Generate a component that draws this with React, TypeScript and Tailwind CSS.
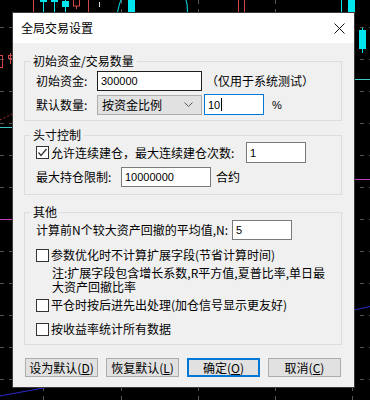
import type { ReactNode } from "react";

const GRID_ROWS = [27, 59, 91, 123, 155, 187, 219, 251, 283, 315, 347, 379];
const GRID_COLS = [43, 121, 198, 275, 352];

function ChartBackdrop() {
  return (
    <svg className="absolute inset-0" width={370} height={400} viewBox="0 0 370 400" aria-hidden>
      {GRID_ROWS.map((y) => (
        <line key={`r${y}`} x1={0} x2={370} y1={y + 0.5} y2={y + 0.5} stroke="#555" strokeDasharray="4 5" />
      ))}
      {GRID_COLS.map((x) => (
        <line key={`c${x}`} x1={x + 0.5} x2={x + 0.5} y1={0} y2={400} stroke="#555" strokeDasharray="4 5" />
      ))}
      {/* top strip candles */}
      <line x1={33.5} x2={33.5} y1={0} y2={12} stroke="#d04848" />
      <rect x={40} y={0} width={7} height={2} fill="#00e5ee" />
      <line x1={43.5} x2={43.5} y1={0} y2={12} stroke="#00e5ee" />
      <rect x={51} y={0} width={7} height={2} fill="#00e5ee" />
      <line x1={54.5} x2={54.5} y1={0} y2={12} stroke="#00e5ee" />
      <rect x={62} y={1} width={7} height={6} fill="#00e5ee" />
      <line x1={65.5} x2={65.5} y1={0} y2={12} stroke="#00e5ee" />
      <rect x={73.5} y={-1} width={6} height={7} fill="none" stroke="#d04848" />
      <line x1={76.5} x2={76.5} y1={6} y2={9} stroke="#d04848" />
      <line x1={88.5} x2={88.5} y1={0} y2={12} stroke="#d04848" />
      <line x1={99.5} x2={99.5} y1={2} y2={7} stroke="#ddd" />
      <path d="M117.5 12 L119.5 4 L121 0" fill="none" stroke="#00e5ee" />
      <rect x={128} y={0} width={7} height={12} fill="#00e5ee" />
      <path d="M186 0 L187 4 L187.5 12" fill="none" stroke="#00e5ee" />
      <line x1={238.5} x2={238.5} y1={0} y2={12} stroke="#d04848" />
      <line x1={244.5} x2={244.5} y1={0} y2={12} stroke="#d04848" />
      <line x1={341.5} x2={341.5} y1={0} y2={12} stroke="#00e5ee" />
      <rect x={348} y={0} width={7} height={12} fill="#00e5ee" />
      {/* right side */}
      <line x1={362.5} x2={362.5} y1={28} y2={53} stroke="#00e5ee" />
      <rect x={359} y={30} width={7} height={19} fill="#00e5ee" />
      <line x1={354} x2={370} y1={79.5} y2={79.5} stroke="#40c8c8" />
      <line x1={354} x2={370} y1={179.5} y2={179.5} stroke="#c040c0" />
      <path d="M354 310 L370 306.5" fill="none" stroke="#2a2ad0" />
      {/* left side */}
      <rect x={-1.5} y={55.5} width={4} height={12} fill="none" stroke="#d04848" />
      <line x1={10.5} x2={10.5} y1={53} y2={64} stroke="#d04848" />
      <rect x={8.5} y={55.5} width={4} height={3} fill="none" stroke="#d04848" />
      <path d="M0 120 L12 114" fill="none" stroke="#b03838" strokeDasharray="2 2" />
      <line x1={0} x2={13} y1={127.5} y2={127.5} stroke="#40c8c8" />
      <line x1={0} x2={13} y1={219.5} y2={219.5} stroke="#c040c0" />
      <path d="M0 396 L43 388 L130 372" fill="none" stroke="#2a2ad0" />
    </svg>
  );
}

function CloseIcon() {
  return (
    <svg width={11} height={11} viewBox="0 0 11 11" aria-hidden>
      <path d="M0.5 0.5 L10.5 10.5 M10.5 0.5 L0.5 10.5" stroke="#111" strokeWidth={1} />
    </svg>
  );
}

function Group({ title, className, children }: { title: string; className: string; children: ReactNode }) {
  return (
    <fieldset className="border border-[#dcdcdc]">
      <legend className="ml-[5px] px-[3px] leading-[14px]">{title}</legend>
      <div className={`flex flex-col pl-[11px] ${className}`}>{children}</div>
    </fieldset>
  );
}

function Field({ value, width, dark }: { value: string; width: string; dark?: boolean }) {
  return (
    <input
      readOnly
      value={value}
      className={`${width} h-full border bg-white px-[3px] font-['Liberation_Sans',sans-serif] text-[11px] text-black outline-none ${
        dark ? "border-[#1e1e1e]" : "border-[#7a7a7a]"
      }`}
    />
  );
}

function CheckBox({ checked }: { checked?: boolean }) {
  return (
    <span className="flex h-[13px] w-[13px] shrink-0 items-center justify-center border border-[#333] bg-white">
      {checked ? (
        <svg width={11} height={11} viewBox="0 0 11 11" aria-hidden>
          <path d="M1.5 5.5 L4 8.5 L9.5 2" fill="none" stroke="#333" strokeWidth={1.3} />
        </svg>
      ) : null}
    </span>
  );
}

function CheckRow({ label, checked }: { label: string; checked?: boolean }) {
  return (
    <div className="flex h-[20px] items-center gap-[2px]">
      <CheckBox checked={checked} />
      <span>{label}</span>
    </div>
  );
}

function Button({ label, hotkey, primary }: { label: string; hotkey: string; primary?: boolean }) {
  return (
    <button
      type="button"
      className={`flex h-[19px] w-[73px] items-center justify-center bg-[#e1e1e1] text-[12px] leading-[14px] text-black ${
        primary ? "border-2 border-[#0078d7]" : "border border-[#adadad]"
      }`}
    >
      {label}(<span className="underline underline-offset-[1px]">{hotkey}</span>)
    </button>
  );
}

export default function App() {
  return (
    <div className="relative h-[400px] w-[370px] overflow-hidden bg-black pl-[12px] pt-[12px] font-['Noto_Sans_CJK_SC','Microsoft_YaHei',sans-serif] text-[12px] leading-[14px] text-black">
      <ChartBackdrop />
      <div className="relative flex h-[376px] w-[343px] flex-col border border-[#3a3a3a] bg-[#f0f0f0]">
        <div className="flex h-[30px] shrink-0 items-center justify-between bg-white pl-[8px] pr-[9px]">
          <span>全局交易设置</span>
          <CloseIcon />
        </div>

        <div className="flex flex-1 flex-col pl-[11px] pr-[12px] pt-[11px]">
          <Group title="初始资金/交易数量" className="gap-[3px] pb-[5px] pt-[3px]">
            <div className="flex h-[20px] items-center">
              <span className="w-[61px]">初始资金:</span>
              <Field value="300000" width="w-[105px]" dark />
              <span className="ml-[4px]">（仅用于系统测试）</span>
            </div>
            <div className="flex h-[21px] items-center">
              <span className="w-[61px]">默认数量:</span>
              <div className="flex h-[20px] w-[105px] items-center justify-between border border-[#adadad] bg-[#e1e1e1] pl-[4px] pr-[8px]">
                <span>按资金比例</span>
                <svg width={9} height={5} viewBox="0 0 9 5" aria-hidden>
                  <path d="M0.5 0.5 L4.5 4.5 L8.5 0.5" fill="none" stroke="#555" />
                </svg>
              </div>
              <div className="ml-[2px] flex h-[21px] w-[60px] items-center border border-[#0078d7] bg-white px-[3px] font-['Liberation_Sans',sans-serif] text-[11px]">
                10
                <span className="ml-px h-[13px] w-px bg-black" />
              </div>
              <span className="ml-[8px] font-['Liberation_Sans',sans-serif] text-[11px]">%</span>
            </div>
          </Group>

          <div className="mt-[7px]">
            <Group title="头寸控制" className="gap-[4px] pb-[7px]">
              <div className="flex h-[21px] items-center">
                <CheckBox checked />
                <span className="ml-[2px] w-[195px]">允许连续建仓，最大连续建仓次数:</span>
                <Field value="1" width="w-[60px]" />
              </div>
              <div className="flex h-[20px] items-center">
                <span className="w-[85px]">最大持仓限制:</span>
                <Field value="10000000" width="w-[90px]" />
                <span className="ml-[5px]">合约</span>
              </div>
            </Group>
          </div>

          <div className="mt-[10px]">
            <Group title="其他" className="pb-[5px] pt-[1px]">
              <div className="flex h-[20px] items-center">
                <span className="w-[196px]">计算前N个较大资产回撤的平均值,N:</span>
                <Field value="5" width="w-[60px]" />
              </div>
              <div className="mt-[5px]">
                <CheckRow label="参数优化时不计算扩展字段(节省计算时间)" />
              </div>
              <p className="mt-[1px] pl-[16px] leading-[14px]">
                注:扩展字段包含增长系数,R平方值,夏普比率,单日最
                <br />
                大资产回撤比率
              </p>
              <div className="mt-[1px]">
                <CheckRow label="平仓时按后进先出处理(加仓信号显示更友好)" />
              </div>
              <div className="mt-[4px]">
                <CheckRow label="按收益率统计所有数据" />
              </div>
            </Group>
          </div>

          <div className="mt-[13px] flex gap-[8px] pl-[1px]">
            <Button label="设为默认" hotkey="D" />
            <Button label="恢复默认" hotkey="L" />
            <Button label="确定" hotkey="O" primary />
            <Button label="取消" hotkey="C" />
          </div>
        </div>
      </div>
    </div>
  );
}
